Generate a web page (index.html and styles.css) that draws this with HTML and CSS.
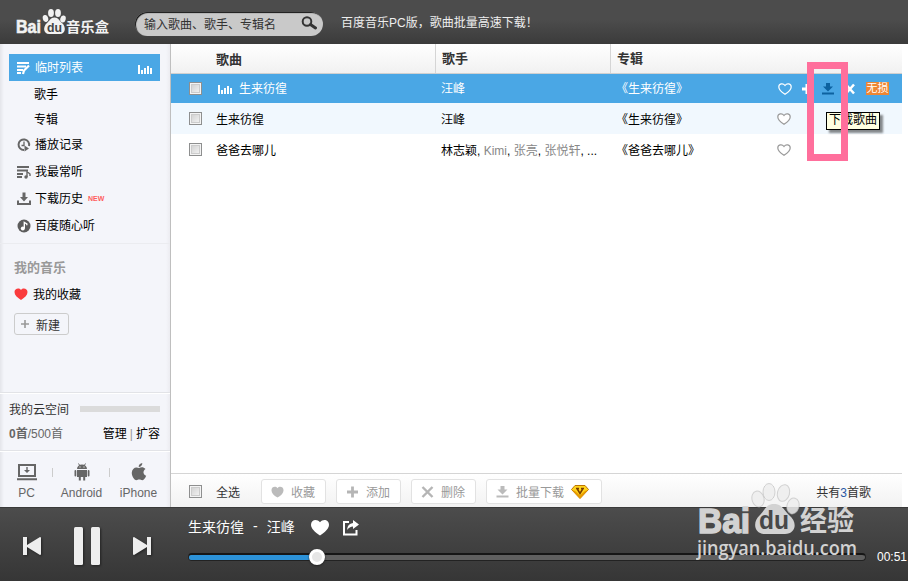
FILE: index.html
```html
<!DOCTYPE html>
<html lang="zh-CN">

	<head>
		<meta charset="UTF-8">
		<title>百度音乐盒</title>
		<link rel="stylesheet" href="styles.css">
	</head>

	<body>
		<div class="header">
			<svg class="logo" width="96" height="28" viewBox="0 0 96 28">
				<g fill="#f2f2f2">
					<ellipse cx="30.500" cy="10.500" rx="2.700" ry="3.500" transform="rotate(-15 30.500 10.500)"/>
					<ellipse cx="36" cy="5" rx="2.900" ry="3.900"/>
					<ellipse cx="43" cy="5" rx="2.900" ry="3.900"/>
					<ellipse cx="48" cy="11" rx="2.700" ry="3.500" transform="rotate(15 48 11)"/>
					<path d="M39.500 9.500c4 0 5 3.500 7.500 5.500 4.500 4 3.500 11-2 11H34c-5.500 0-6.500-7-2-11 2.500-2 3.500-5.500 7.500-5.500z"/>
					<text class="logo-bold small" x="1" y="25" font-size="18" textLength="25" lengthAdjust="spacingAndGlyphs">Bai</text>
					<text class="logo-cn" x="51" y="24" font-size="14" textLength="43" lengthAdjust="spacingAndGlyphs">音乐盒</text>
				</g>
				<text class="logo-bold" x="32" y="24" font-size="13" fill="#444" textLength="15" lengthAdjust="spacingAndGlyphs">du</text>
			</svg>
			<div class="search">
				<span>输入歌曲、歌手、专辑名</span>
				<svg width="16" height="14" viewBox="0 0 16 14"><circle cx="6" cy="5.500" r="4.300" fill="none" stroke="#333" stroke-width="2"/><path d="M9.500 8.500l5 3.500" stroke="#333" stroke-width="3" stroke-linecap="round"/></svg>
			</div>
			<span class="notice">百度音乐PC版，歌曲批量高速下载！</span>
		</div>

		<div class="main">
			<div class="sidebar">
				<ul class="menu">
					<li class="active">
						<svg width="14" height="14" viewBox="0 0 14 14"><path d="M0 2h12M0 5.500h9M0 9h6M0 12h4" stroke="#fff" stroke-width="2.200"/><path d="M6 13l1-3.500 5-5" stroke="#fff" stroke-width="2.200" fill="none"/></svg>
						<span>临时列表</span>
						<svg class="bars" width="14" height="9" viewBox="0 0 14 9"><path d="M0 0h2v9H0zM3 5h2v4H3zM6 3h2v6H6zM9 1h2v8H9zM12 3h2v6h-2z" fill="#fff"/></svg>
					</li>
					<li class="sub">歌手</li>
					<li class="sub">专辑</li>
					<li>
						<svg width="14" height="14" viewBox="0 0 14 14"><path d="M12 8a5.300 5.300 0 1 0-5 4" fill="none" stroke="#666" stroke-width="2"/><path d="M7 3.500V7.500H4.500" fill="none" stroke="#666" stroke-width="1.300"/><path d="M7.500 7.500l4.500 3-4.500 3z" fill="#666"/></svg>
						<span>播放记录</span>
					</li>
					<li>
						<svg width="14" height="14" viewBox="0 0 14 14"><path d="M0 2h12M0 5.500h11M0 9h6M0 12h5" stroke="#666" stroke-width="2.200"/><path d="M10 6v6M10 6.500l3 2.500v2" fill="none" stroke="#666" stroke-width="1.400"/><circle cx="9" cy="12" r="1.700" fill="#666"/></svg>
						<span>我最常听</span>
					</li>
					<li>
						<svg width="14" height="14" viewBox="0 0 14 14"><path d="M5.500.500h3v4.500H11L7 9.500 3 5h2.500z" fill="#666"/><path d="M1 8.500V12h12V8.500" fill="none" stroke="#666" stroke-width="2"/></svg>
						<span>下载历史</span>
						<em>NEW</em>
					</li>
					<li>
						<svg width="14" height="14" viewBox="0 0 14 14"><circle cx="7" cy="7" r="6.500" fill="#5c5c5c"/><path d="M7.300 9.500V3.500l2.500 1.300v1.500" fill="none" stroke="#fff" stroke-width="1.400"/><circle cx="5.800" cy="9.500" r="2" fill="#fff"/></svg>
						<span>百度随心听</span>
					</li>
				</ul>
				<div class="mine">
					<h3>我的音乐</h3>
					<p>
						<svg width="14" height="12" viewBox="0 0 14 12"><path d="M7 12C3 9.500.5 7 .5 4 .5.500 5-.8 7 2 9-.8 13.500.500 13.500 4c0 3-2.500 5.500-6.500 8z" fill="#fa3b3d"/></svg>
						<span>我的收藏</span>
					</p>
					<a class="create"><svg width="8" height="8" viewBox="0 0 8 8"><path d="M4 0v8M0 4h8" stroke="#999" stroke-width="1.600"/></svg>新建</a>
				</div>
				<div class="cloud">
					<div class="line"><span>我的云空间</span><i></i></div>
					<div class="line"><span class="count"><b>0首</b>/500首</span><span class="manage">管理<i>|</i>扩容</span></div>
				</div>
				<div class="clients">
					<div class="client">
						<svg width="20" height="18" viewBox="0 0 20 18"><path d="M2 2h16v11H2zM0 16.300h20" fill="none" stroke="#666" stroke-width="2"/><path d="M9.300 4h1.400v3H13l-3 3-3-3h2.300z" fill="#666"/></svg>
						<span>PC</span>
					</div>
					<div class="client">
						<svg width="16" height="18" viewBox="0 0 16 18"><path d="M3 6a5 4.500 0 0 1 10 0zM3 7h10v7H3zM4.800 14h2v3.500h-2zM9.200 14h2v3.500h-2z" fill="#666"/><path d="M1.400 8v4.500M14.600 8v4.500" stroke="#666" stroke-width="1.800" stroke-linecap="round"/><path d="M4.500.500L6 3M11.500.500L10 3" stroke="#666"/><path d="M5.500 4h1M9.500 4h1" stroke="#fff"/></svg>
						<span>Android</span>
					</div>
					<div class="client">
						<svg width="16" height="18" viewBox="0 0 16 18"><path d="M8 5c2-1 4.500-1.300 6.500 1-3 2-2.500 5.500.7 6.700-1.500 3.500-3 5-5 4.300-1.500-.6-2.500-.6-4 0C3.500 18 .5 13 .8 9.500 1 5.500 4.500 3.300 8 5zM7.700 4C7.500 2 9.300.300 11.300 0c.200 2-1.500 4-3.600 4z" fill="#666"/></svg>
						<span>iPhone</span>
					</div>
				</div>
			</div>

			<div class="content">
				<div class="row head">
					<span class="check"></span>
					<span class="song">歌曲</span>
					<span class="singer">歌手</span>
					<span class="album">专辑</span>
				</div>
				<div class="row playing">
					<span class="check"><i class="box"></i></span>
					<span class="song"><svg class="bars" width="14" height="9" viewBox="0 0 14 9"><path d="M0 0h2v9H0zM3 5h2v4H3zM6 3h2v6H6zM9 1h2v8H9zM12 3h2v6h-2z" fill="#fff"/></svg>生来彷徨</span>
					<span class="singer">汪峰</span>
					<span class="album">《生来彷徨》</span>
					<span class="tools">
						<svg width="14" height="12" viewBox="0 0 14 12"><path d="M7 11.300C3.500 9 .8 6.500.8 4 .8.500 5-.3 7 2.500 9-.3 13.200.500 13.200 4c0 2.500-2.700 5-6.200 7.300z" fill="none" stroke="#fff" stroke-width="1.200"/></svg>
						<svg class="plus" width="12" height="12" viewBox="0 0 12 12"><path d="M6 1v10M1 6h10" stroke="#fff" stroke-width="3"/></svg>
						<svg class="down" width="12" height="12" viewBox="0 0 12 12"><path d="M4 0h4v3.500h3L6 8.500 1 3.500h3zM0 9.500h12v2H0z" fill="#0d62a0"/></svg>
						<svg class="del" width="10" height="12" viewBox="0 0 10 12"><path d="M1 1.500l8 9M9 1.500l-8 9" stroke="#fff" stroke-width="2.500"/></svg>
						<b class="tag">无损</b>
					</span>
				</div>
				<div class="row even">
					<span class="check"><i class="box"></i></span>
					<span class="song">生来彷徨</span>
					<span class="singer">汪峰</span>
					<span class="album">《生来彷徨》</span>
					<span class="tools"><svg width="14" height="12" viewBox="0 0 14 12"><path d="M7 11.300C3.500 9 .8 6.500.8 4 .8.500 5-.3 7 2.500 9-.3 13.200.500 13.200 4c0 2.500-2.700 5-6.200 7.300z" fill="#fff" stroke="#999" stroke-width="1.200"/></svg></span>
				</div>
				<div class="row">
					<span class="check"><i class="box"></i></span>
					<span class="song">爸爸去哪儿</span>
					<span class="singer">林志颖, <a>Kimi</a>, <a>张亮</a>, <a>张悦轩</a>, ...</span>
					<span class="album">《爸爸去哪儿》</span>
					<span class="tools"><svg width="14" height="12" viewBox="0 0 14 12"><path d="M7 11.300C3.500 9 .8 6.500.8 4 .8.500 5-.3 7 2.500 9-.3 13.200.500 13.200 4c0 2.500-2.700 5-6.200 7.300z" fill="#fff" stroke="#999" stroke-width="1.200"/></svg></span>
				</div>

				<div class="batch">
					<span class="check"><i class="box"></i></span>
					<span class="all">全选</span>
					<a class="btn"><svg width="14" height="12" viewBox="0 0 14 12"><path d="M7 12C3 9.500.5 7 .5 4 .5.500 5-.8 7 2 9-.8 13.500.500 13.500 4c0 3-2.500 5.500-6.500 8z" fill="#bbb"/></svg>收藏</a>
					<a class="btn"><svg width="12" height="12" viewBox="0 0 12 12"><path d="M6 .5v11M.5 6h11" stroke="#b5b5b5" stroke-width="2.800"/></svg>添加</a>
					<a class="btn"><svg width="12" height="12" viewBox="0 0 12 12"><path d="M1 1l10 10M11 1L1 11" stroke="#b5b5b5" stroke-width="2.400"/></svg>删除</a>
					<a class="btn vip"><svg width="12" height="12" viewBox="0 0 12 12"><path d="M4 0h4v3.500h3L6 8.500 1 3.500h3zM0 9.500h12v2H0z" fill="#bbb"/></svg>批量下载<svg class="gem" width="18" height="14" viewBox="0 0 18 14"><path d="M4 .5h10l3.500 4L9 13.500.5 4.500z" fill="#ffd31c" stroke="#bd7600"/><path d="M1 5l8 8.500L17 5l-3 1-5 4.500L4 6z" fill="#e99a00"/><path d="M5 3.500h3M10 3.500h3M6.300 4L9 8.500 11.700 4" fill="none" stroke="#7a3d00" stroke-width="1.500"/></svg></a>
					<span class="total">共有<b>3</b>首歌</span>
				</div>
			</div>
		</div>

		<div class="player">
			<div class="control">
				<svg width="20" height="20" viewBox="0 0 20 20"><path d="M1 1h4v8L18 1q1 0 1 1v16q0 1-1 1L5 11v8H1z" fill="#eee"/></svg>
				<svg width="28" height="40" viewBox="0 0 28 40"><rect x="1" y="1" width="9" height="38" rx="1.500" fill="#eee"/><rect x="18" y="1" width="9" height="38" rx="1.500" fill="#eee"/></svg>
				<svg width="20" height="20" viewBox="0 0 20 20"><path d="M19 1h-4v8L2 1Q1 1 1 2v16q0 1 1 1l13-8v8h4z" fill="#eee"/></svg>
			</div>
			<div class="info">
				<div class="name">
					<span>生来彷徨</span><span class="dash">-</span><span>汪峰</span>
					<svg class="love" width="20" height="17" viewBox="0 0 20 17"><path d="M10 16.500C5 13.500 1 9.500 1 5.800 1 .500 7-.8 10 3.300 13-.8 19 .500 19 5.800c0 3.700-4 7.700-9 10.700z" fill="#fff"/></svg>
					<svg class="share" width="16" height="16" viewBox="0 0 16 16"><path d="M6 2H1v12.500h12.500V10" fill="none" stroke="#fff" stroke-width="2"/><path d="M10 0l6 4.500L10 9V6.500Q6.500 6.500 4 10q.5-6.500 6-7z" fill="#fff"/></svg>
				</div>
				<div class="progress"><div class="played" style="width: 19%"><i></i></div></div>
			</div>
			<span class="time">00:51</span>
		</div>

		<div class="tip">下载歌曲</div>
		<div class="frame"></div>
		<svg class="mark" width="170" height="90" viewBox="0 0 170 90">
			<g fill="#ededed" fill-opacity="0.850" stroke="#bbb" stroke-opacity="0.600">
				<ellipse cx="62" cy="16" rx="6" ry="8" transform="rotate(-15 62 16)"/>
				<ellipse cx="73" cy="9" rx="6" ry="8.500"/>
				<ellipse cx="87.500" cy="10" rx="6" ry="8.500" transform="rotate(15 87.500 10)"/>
				<ellipse cx="97" cy="23" rx="6" ry="8" transform="rotate(15 97 23)"/>
			</g>
			<g fill="#d2d2d2">
				<path d="M78 21c8 0 10 6 15 11 9 7 7 19-4 19H69c-11 0-13-12-5-19 5-5 6-11 14-11z"/>
				<text class="logo-bold big" x="2" y="50" font-size="35" textLength="52" lengthAdjust="spacingAndGlyphs">Bai</text>
				<text class="logo-cn" x="104" y="48" font-size="28" textLength="54" lengthAdjust="spacingAndGlyphs">经验</text>
				<text class="logo-url" x="1" y="72" font-size="19" textLength="160" lengthAdjust="spacingAndGlyphs">jingyan.baidu.com</text>
			</g>
			<text class="logo-bold" x="63" y="46" font-size="25" fill="#484848" textLength="30" lengthAdjust="spacingAndGlyphs">du</text>
		</svg>
	</body>

</html>
```

FILE: styles.css
```css
* {
	margin: 0;
	padding: 0;
	list-style: none;
	box-sizing: border-box;
}

body {
	width: 908px;
	height: 581px;
	overflow: hidden;
	position: relative;
	font: 12px "Liberation Sans", "Noto Sans CJK SC", sans-serif;
	color: #000;
	background: #fff;
}

svg {
	display: block;
	flex: none;
}

i, em {
	font-style: normal;
}

.header {
	height: 44px;
	display: flex;
	background: linear-gradient(#4c4c4c 45%, #3b3b3b);
}

.logo {
	margin: 8px 0 0 15px;
}

.logo-bold {
	font-family: "Liberation Sans", sans-serif;
	font-weight: bold;
}

.small {
	stroke: #f2f2f2;
	stroke-width: .6px;
}

.big {
	stroke: #d2d2d2;
	stroke-width: 1.5px;
}

.logo-cn {
	font-family: "Noto Sans CJK SC", sans-serif;
	font-weight: bold;
}

.logo-url {
	font-family: "Open Sans", sans-serif;
	font-weight: 600;
}

.search {
	width: 188px;
	height: 24px;
	margin: 12px 0 0 24px;
	padding: 0 6px 2px 9px;
	border-radius: 12px;
	display: flex;
	align-items: center;
	justify-content: space-between;
	background: #c9c9c9;
	box-shadow: inset 1px 1px 1px #111;
	color: #333;
}

.notice {
	margin-left: 18px;
	line-height: 47px;
	color: #eee;
}

.main {
	height: 463px;
	display: flex;
}

.sidebar {
	width: 171px;
	display: flex;
	flex-direction: column;
	background: linear-gradient(to right, #e4e5ea, #f4f5fa 4px, #f4f5fa 166px, #ececf1);
	border-right: 1px solid #bfbfbf;
}

.menu {
	height: 200px;
	padding: 10px 10px 0 9px;
	border-bottom: 1px solid #ebecf0;
}

.menu li {
	height: 27px;
	padding-left: 8px;
	display: flex;
	align-items: center;
}

.menu li span {
	margin-left: 4px;
	padding-bottom: 2px;
}

.menu .active {
	color: #fff;
	background: #4aa7e5;
}

.menu .sub {
	height: 25px;
	padding: 0 0 1px 25px;
}

.menu .bars {
	margin: 4px 8px 0 auto;
}

.menu em {
	margin-left: 5px;
	font-size: 7px;
	font-weight: bold;
	color: #ff5d5d;
}

.mine {
	height: 149px;
	padding: 13px 0 0 14px;
	border-bottom: 1px solid #e2e3e7;
}

.mine h3 {
	font-size: 13px;
	line-height: 22px;
	color: #999;
}

.mine p {
	height: 30px;
	display: flex;
	align-items: center;
	gap: 5px;
}

.mine p span {
	padding-bottom: 2px;
}

.create {
	width: 55px;
	height: 22px;
	margin-top: 4px;
	padding-left: 6px;
	border: 1px solid #ccc;
	border-radius: 3px;
	display: flex;
	align-items: center;
	gap: 7px;
	color: #333;
}

.cloud {
	height: 58px;
	padding: 2px 10px 0 9px;
	border-top: 1px solid #fff;
	border-bottom: 1px solid #e2e3e7;
}

.cloud .line {
	height: 24px;
	display: flex;
	align-items: center;
	justify-content: space-between;
	color: #333;
}

.cloud .line > i {
	width: 80px;
	height: 6px;
	margin-top: 2px;
	background: #dbdbdb;
}

.cloud .count {
	color: #666;
}

.cloud .manage {
	color: #000;
}

.manage i {
	margin: 0 3px;
	color: #999;
}

.clients {
	flex: 1;
	padding-top: 11px;
	border-top: 1px solid #fff;
	display: flex;
	color: #666;
}

.client {
	width: 57px;
	display: flex;
	flex-direction: column;
	align-items: center;
	gap: 5px;
	background: linear-gradient(#ccc, #ccc) 100% 5px / 1px 9px no-repeat;
}

.client:first-child {
	width: 53px;
}

.client:last-child {
	background: none;
}

.content {
	width: 731px;
	display: flex;
	flex-direction: column;
}

.row {
	height: 31px;
	display: flex;
	align-items: center;
}

.check {
	width: 45px;
	padding-left: 18px;
}

.box {
	width: 13px;
	height: 13px;
	border: 1px solid #8e8f8f;
	box-shadow: inset 0 0 0 1px #f4f4f4, inset 0 0 0 2px #ccc;
	display: block;
	background: linear-gradient(135deg, #ccc, #f8f8f8);
}

.song {
	width: 219px;
	height: 100%;
	display: flex;
	align-items: center;
}

.song .bars {
	margin: 3px 7px 0 2px;
}

.singer {
	width: 175px;
	padding-left: 6px;
	white-space: nowrap;
}

.singer a {
	color: #888;
}

.album {
	width: 170px;
	padding-left: 7px;
}

.row:not(.head) .album {
	padding-left: 6px;
}

.head {
	height: 30px;
	font-size: 13px;
	font-weight: bold;
	color: #333;
	background: linear-gradient(#fff, #f1f1f1);
	border-bottom: 1px solid #d0d0d0;
}

.head .song {
	padding-bottom: 1px;
}

.head .singer,
.head .album {
	height: 29px;
	line-height: 29px;
	border-left: 1px solid #d5d5d5;
	padding-left: 6px;
}

.playing {
	height: 29px;
	color: #fff;
	background: #4aa7e5;
}

.playing .song,
.playing .singer,
.playing .album {
	padding-bottom: 2px;
}

.even {
	background: #f1f8fe;
}

.tools {
	display: flex;
	align-items: center;
	margin-left: -3px;
}

.playing .tools {
	margin-left: -2px;
}

.plus {
	margin-left: 9px;
}

.down {
	margin-left: 9px;
}

.del {
	margin-left: 11px;
}

.tag {
	width: 23px;
	height: 13px;
	margin-left: 11px;
	line-height: 13px;
	font-size: 11px;
	font-weight: normal;
	text-align: center;
	white-space: nowrap;
	background: #ee8632;
}

.batch {
	height: 34px;
	margin-top: auto;
	padding-top: 2px;
	display: flex;
	align-items: center;
	border-top: 1px solid #d5d5d5;
	background: linear-gradient(#fff, #f2f2f2);
	color: #333;
}

.all {
	width: 45px;
}

.btn {
	width: 65px;
	height: 25px;
	margin-right: 10px;
	padding-left: 9px;
	border: 1px solid #e2e2e2;
	border-radius: 3px;
	display: flex;
	align-items: center;
	gap: 7px;
	background: #fff;
	color: #999;
}

.btn svg {
	width: 13px;
}

.vip {
	width: 116px;
}

.vip .gem {
	width: 18px;
}

.total {
	margin-left: auto;
	padding-right: 31px;
}

.total b {
	font-weight: normal;
	color: #2a58a5;
}

.player {
	height: 74px;
	display: flex;
	border-top: 1px solid #3a3a3a;
	background: linear-gradient(#4c4c4c, #363636);
	color: #fff;
}

.control {
	width: 188px;
	height: 75px;
	padding-left: 22px;
	display: flex;
	align-items: center;
	gap: 31px;
	filter: drop-shadow(1px 1px 1px #222);
}

.info {
	width: 678px;
}

.name {
	height: 39px;
	font-size: 14px;
	display: flex;
	align-items: center;
}

.name span {
	padding-bottom: 3px;
}

.dash {
	margin: 0 9px;
}

.love {
	margin-left: 15px;
}

.share {
	margin-left: 13px;
}

.progress {
	height: 8px;
	margin-top: 6px;
	border: 1px solid #222;
	border-top: 2px solid #161616;
	border-radius: 4px;
	background: #606060;
}

.played {
	height: 5px;
	position: relative;
	border-radius: 3px;
	background: #2c92d8;
}

.played i {
	width: 16px;
	height: 16px;
	position: absolute;
	right: -8px;
	top: -6px;
	border: 3px solid #fff;
	border-radius: 50%;
	background: #e6e6e6;
	box-shadow: 0 1px 2px #222;
}

.time {
	margin: 42px 0 0 11px;
}

.tip {
	position: absolute;
	left: 826px;
	top: 112px;
	width: 54px;
	height: 18px;
	border: 1px solid #000;
	line-height: 15px;
	text-align: center;
	background: #ffffe1;
	box-shadow: 3px 3px 2px rgba(0, 0, 0, .45);
}

.frame {
	position: absolute;
	left: 807px;
	top: 62px;
	width: 41px;
	height: 99px;
	border: 7px solid #ff6f9c;
}

.mark {
	position: absolute;
	left: 696px;
	top: 483px;
}
```
